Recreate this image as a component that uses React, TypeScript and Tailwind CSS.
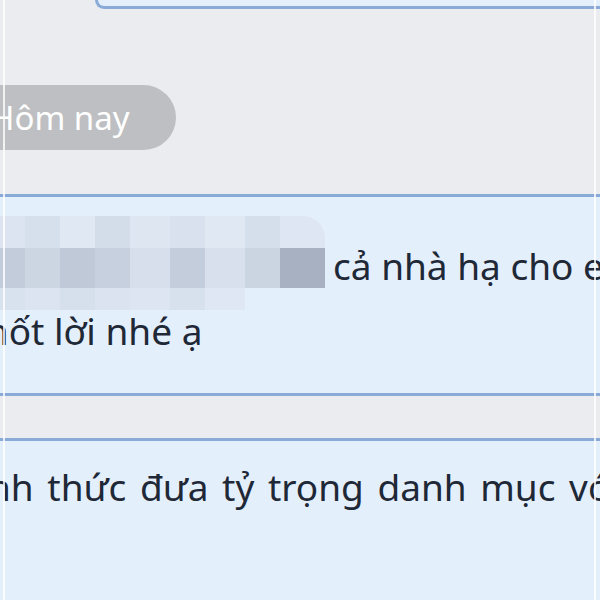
import React from "react";

const font = { fontFamily: '"Noto Sans", "Open Sans", sans-serif' };

// pixelated name block (colours per cell, row by row)
const mosaic: string[][] = [
  ["bg-[#dbe4f0]", "bg-[#d6e0ed]", "bg-[#dfe8f3]", "bg-[#d3ddea]", "bg-[#dde6f1]", "bg-[#d8e1ed]", "bg-[#dfe8f3]", "bg-[#d5dfec]", "bg-[#dde6f2]"],
  ["bg-[#c2ccda]", "bg-[#ccd5e2]", "bg-[#bfc9d8]", "bg-[#c6d0de]", "bg-[#d6dfeb]", "bg-[#c3cddb]", "bg-[#d7e0ec]", "bg-[#cbd5e2]", "bg-[#a7b1c1]"],
  ["bg-[#d8e1ee]", "bg-[#dbe4f0]", "bg-[#d6dfec]", "bg-[#dae3ef]", "bg-[#dce5f1]", "bg-[#d7e0ed]", "bg-[#dee7f3]", "bg-[#e4effc]", "bg-[#e4effc]"],
];
const widths = ["w-[25px]", "w-[35px]", "w-[35px]", "w-[35px]", "w-[40px]", "w-[35px]", "w-[40px]", "w-[35px]", "w-[45px]"];
const heights = ["h-[32px]", "h-[40px]", "h-[22px]"];

export default function App() {
  return (
    <div className="relative w-[600px] h-[600px] overflow-hidden bg-[#ebecf0]" style={font}>
      {/* bottom of previous bubble */}
      <div className="ml-[95px] -mr-[10px] h-[9px] bg-[#e4effc] border-b-[3px] border-l-[3px] border-[#8aaad8] rounded-bl-[14px]" />

      {/* date pill */}
      <div className="mt-[76px] -ml-[40px] flex">
        <div className="h-[65px] pl-[30px] pr-[46px] rounded-full bg-[#bebfc2] text-white text-[33px] flex items-center">
          Hôm nay
        </div>
      </div>

      {/* message bubble */}
      <div className="mt-[44px] -mx-[10px] bg-[#e4effc] border-y-[3px] border-[#8aaad8] pt-[36px] pb-[30px] text-[#1f2836] text-[37px] leading-[65px] whitespace-nowrap">
        <div className="flex items-center h-[65px] pl-[10px]">
          <div className="flex shrink-0 -mt-[6px] rounded-r-[22px] overflow-hidden">
            {widths.map((w, c) => (
              <div key={c} className={`flex flex-col shrink-0 ${w}`}>
                {mosaic.map((row, r) => (
                  <div key={r} className={`${heights[r]} ${row[c]}`} />
                ))}
              </div>
            ))}
          </div>
          <span className="ml-[8px]">cả nhà hạ cho em</span>
        </div>
        <div className="-ml-[22px]">chốt lời nhé ạ</div>
      </div>

      {/* next bubble */}
      <div className="mt-[42px] -mx-[10px] h-[200px] bg-[#e4effc] border-t-[3px] border-[#8aaad8] pt-[13px] text-[#1f2836] text-[37px] leading-[65px] whitespace-nowrap">
        <div className="-ml-[2px] [word-spacing:4px]">nh thức đưa tỷ trọng danh mục với</div>
      </div>

      {/* window edge lines */}
      <div className="absolute top-0 bottom-0 left-[3px] w-[2px] bg-white/80" />
      <div className="absolute top-0 bottom-0 left-[594px] w-[2px] bg-white/80" />
    </div>
  );
}
